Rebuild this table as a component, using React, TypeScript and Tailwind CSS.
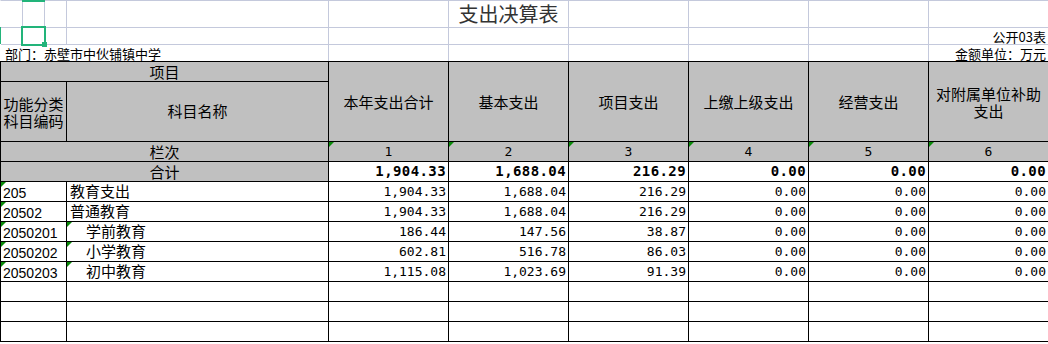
const cols = "grid grid-cols-[66px_262px_120px_120px_120px_120px_120px_120px]";
const topCols = "grid grid-cols-[22px_22px_22px_262px_120px_120px_120px_120px_120px_120px]";

const rows = [
  { code: "205", name: "教育支出", sub: false, v: ["1,904.33", "1,688.04", "216.29", "0.00", "0.00", "0.00"] },
  { code: "20502", name: "普通教育", sub: false, v: ["1,904.33", "1,688.04", "216.29", "0.00", "0.00", "0.00"] },
  { code: "2050201", name: "学前教育", sub: true, v: ["186.44", "147.56", "38.87", "0.00", "0.00", "0.00"] },
  { code: "2050202", name: "小学教育", sub: true, v: ["602.81", "516.78", "86.03", "0.00", "0.00", "0.00"] },
  { code: "2050203", name: "初中教育", sub: true, v: ["1,115.08", "1,023.69", "91.39", "0.00", "0.00", "0.00"] },
];

const heads = ["本年支出合计", "基本支出", "项目支出", "上缴上级支出", "经营支出", "对附属单位补助支出"];

// little green mark excel puts on "number stored as text" cells
function Tri() {
  return <span className="absolute left-0 top-0 h-0 w-0 border-t-[5px] border-r-[5px] border-t-[#0a8a0a] border-r-transparent" />;
}

export default function App() {
  return (
    <div className="relative w-[1048px] h-[344px] overflow-hidden bg-white text-black font-['Noto_Sans_CJK_SC',sans-serif]">
      {/* sheet area above the table */}
      <div className={`${topCols} border-t border-l border-t-[#c4c9dc] border-l-transparent`}>
        {Array.from({ length: 10 }).map((_, i) => (
          <div key={"a" + i} className="h-[27px] border-r border-b border-[#c4c9dc] flex items-center justify-center">
            {i === 5 && <span className="text-[20px] leading-none text-[#333] whitespace-nowrap">支出决算表</span>}
          </div>
        ))}
        {Array.from({ length: 10 }).map((_, i) => (
          <div key={"b" + i} className="h-[17px] border-r border-b border-[#c4c9dc] flex items-end justify-end pr-[2px]">
            {i === 9 && <span className="text-[13px] leading-[14px] whitespace-nowrap">公开03表</span>}
          </div>
        ))}
        <div className="col-span-4 h-[16px] border-r border-[#c4c9dc] flex items-end pl-[4px]">
          <span className="text-[13px] leading-[14px] whitespace-nowrap">部门：赤壁市中伙铺镇中学</span>
        </div>
        {Array.from({ length: 5 }).map((_, i) => (
          <div key={"c" + i} className="h-[16px] border-r border-[#c4c9dc]" />
        ))}
        <div className="h-[16px] border-r border-[#c4c9dc] flex items-end justify-end pr-[2px]">
          <span className="text-[13px] leading-[14px] whitespace-nowrap">金额单位：万元</span>
        </div>
      </div>

      {/* table */}
      <div className={`${cols} border-l border-t border-black text-[15px]`}>
        <div className="col-span-2 h-[20px] bg-[#c0c0c0] border-r border-b border-black flex items-center justify-center leading-none">项目</div>
        {heads.map((h) => (
          <div key={h} className="row-span-2 bg-[#c0c0c0] border-r border-b border-black flex items-center justify-center text-center leading-[17px] px-[2px]">
            {h}
          </div>
        ))}
        <div className="h-[60px] bg-[#c0c0c0] border-r border-b border-black flex items-center justify-center text-center leading-[17px]">功能分类科目编码</div>
        <div className="h-[60px] bg-[#c0c0c0] border-r border-b border-black flex items-center justify-center">科目名称</div>

        <div className="col-span-2 h-[20px] bg-[#c0c0c0] border-r border-b border-black flex items-center justify-center leading-none">栏次</div>
        {[1, 2, 3, 4, 5, 6].map((n) => (
          <div key={n} className="relative h-[20px] bg-[#c0c0c0] border-r border-b border-black flex items-center justify-center font-['DejaVu_Sans_Mono',monospace] text-[13px]">
            <Tri />
            {n}
          </div>
        ))}

        <div className="col-span-2 h-[20px] bg-[#c0c0c0] border-r border-b border-black flex items-center justify-center leading-none">合计</div>
        {rows[0].v.map((x, i) => (
          <div key={i} className="h-[20px] border-r border-b border-black flex items-center justify-end pr-[2px] font-['DejaVu_Sans_Mono',monospace] font-bold text-[14px] tracking-[0.4px]">
            {x}
          </div>
        ))}

        {rows.map((r) => (
          <>
            <div key={r.code} className="relative h-[20px] border-r border-b border-black flex items-center pl-[2px] pt-[3px] leading-none font-['Liberation_Sans',sans-serif] text-[14px]">
              <Tri />
              {r.code}
            </div>
            <div className={`relative h-[20px] border-r border-b border-black flex items-center leading-none pb-[2px] ${r.sub ? "pl-[19px]" : "pl-[3px]"}`}>
              {r.sub && <Tri />}
              {r.name}
            </div>
            {r.v.map((x, i) => (
              <div key={r.code + i} className="h-[20px] border-r border-b border-black flex items-center justify-end pr-[2px] pt-px font-['DejaVu_Sans_Mono',monospace] text-[13px]">
                {x}
              </div>
            ))}
          </>
        ))}

        {Array.from({ length: 24 }).map((_, i) => (
          <div key={"e" + i} className="h-[20px] border-r border-b border-black" />
        ))}
      </div>

      {/* selected cell + header markers */}
      <div className="absolute left-[21px] top-[26px] w-[25px] h-[20px] border-2 border-[#22b47a]" />
      <div className="absolute left-[42px] top-[42px] w-[5px] h-[5px] bg-[#22b47a]" />
      <div className="absolute left-[22px] top-0 w-[23px] h-[2px] bg-[#22b47a]" />
      <div className="absolute left-0 top-[27px] w-[1px] h-[17px] bg-[#22b47a]" />
    </div>
  );
}
